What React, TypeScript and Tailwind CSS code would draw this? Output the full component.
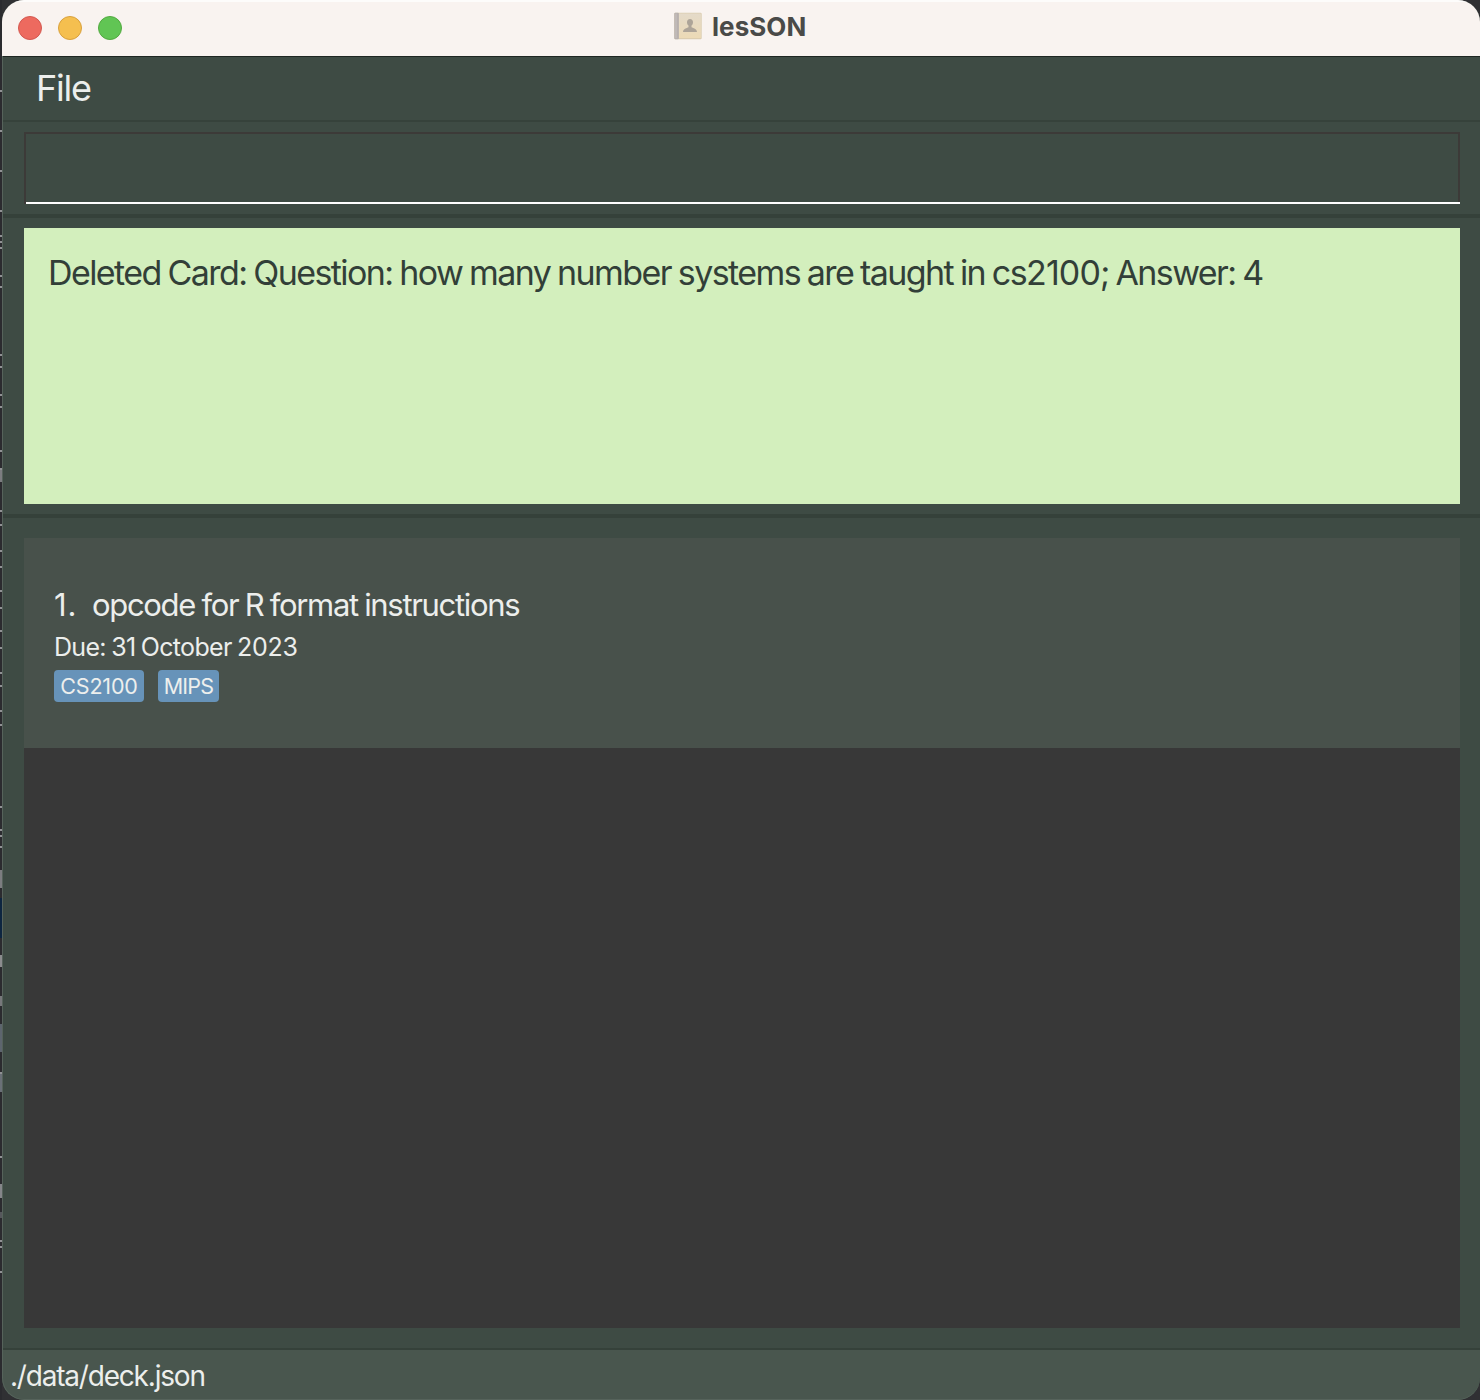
import React from "react";

const TICKS = [
  90, 130, 170, 210, 235, 241, 247, 275, 286, 354, 366, 394, 406, 450, 468, 510, 524, 550,
  566, 590, 607, 630, 647, 672, 685, 710, 724, 806, 829, 835, 846, 930, 1072, 1156, 1190, 1240, 1246, 1271,
];

const BLOCKS = [
  { top: 470, height: 12, color: "#7c7d80" },
  { top: 870, height: 18, color: "#7c7d80" },
  { top: 898, height: 40, color: "#0d2540" },
  { top: 955, height: 12, color: "#8b8c8e" },
  { top: 996, height: 10, color: "#77787b" },
  { top: 1024, height: 28, color: "#5d656e" },
  { top: 1074, height: 18, color: "#6a7077" },
  { top: 1184, height: 14, color: "#85868a" },
  { top: 1212, height: 6, color: "#56585c" },
];

function Backdrop() {
  return (
    <div className="absolute inset-y-0 left-0 w-0.5 overflow-hidden bg-[#2b2b2f]">
      {TICKS.map((top) => (
        <div key={top} className="absolute left-0 h-0.5 w-0.5 bg-[#919295]" style={{ top }} />
      ))}
      {BLOCKS.map((b) => (
        <div key={b.top} className="absolute left-0 w-0.5" style={{ top: b.top, height: b.height, background: b.color }} />
      ))}
    </div>
  );
}

function BookIcon() {
  return (
    <svg width="28" height="28" viewBox="0 0 28 28" className="shrink-0">
      <defs>
        <linearGradient id="cover" x1="0" y1="0" x2="0" y2="1">
          <stop offset="0" stopColor="#e4dac9" />
          <stop offset="1" stopColor="#ecdab6" />
        </linearGradient>
      </defs>
      <rect x="0.3" y="0.8" width="27.4" height="26.4" rx="1.2" fill="#dccdb0" />
      <rect x="4.5" y="1.6" width="22.4" height="24.4" rx="0.6" fill="url(#cover)" />
      <rect x="0.3" y="0.8" width="4.6" height="26.4" rx="1" fill="#b8b0ae" />
      <rect x="1.4" y="1.6" width="1.2" height="24.6" fill="#c6bfbd" />
      <path
        d="M16 7c-1.900 0-3 1.400-3 3.200 0 1.400.6 2.600 1.500 3.300v1.800c-1.800.9-5.300 1.500-5.500 4.700h14c-.2-3.200-3.700-3.800-5.500-4.700v-1.800c.9-.7 1.500-1.900 1.500-3.300C19 8.400 17.900 7 16 7z"
        fill="#ada498"
      />
    </svg>
  );
}

function TitleBar() {
  return (
    <header className="relative flex h-14 shrink-0 items-center gap-4 border-t-2 border-white/70 bg-[#f9f3f0] pb-0.5 pl-4">
      <span className="size-6 rounded-full border border-[#d35850] bg-[#ed6a5f]" />
      <span className="size-6 rounded-full border border-[#d8a03d] bg-[#f5bf4f]" />
      <span className="size-6 rounded-full border border-[#53a940] bg-[#61c554]" />
      <div className="absolute left-[672px] top-[9px] flex items-center gap-[10px]">
        <BookIcon />
        <h1 className="mt-0.5 whitespace-nowrap text-[26px] leading-7 font-bold tracking-[0.05px] text-[#4a4a48]">lesSON</h1>
      </div>
    </header>
  );
}

function Tag({ children, className }: { children: React.ReactNode; className: string }) {
  return (
    <span className={`flex h-8 items-center justify-center whitespace-nowrap rounded bg-[#6793b9] text-[21.5px] text-[#edefed] ${className}`}>
      {children}
    </span>
  );
}

export default function App() {
  return (
    <div className="relative h-[1400px] w-[1480px] overflow-hidden bg-[#303033] pl-0.5 font-['Inter',sans-serif] text-[#eceeec]">
      <Backdrop />
      <div className="relative flex h-full flex-col overflow-hidden rounded-[22px] bg-[#3e4b44]">
        <TitleBar />
        <nav className="flex h-[66px] shrink-0 items-center border-b-2 border-t border-b-[#36423b] border-t-[#1f2622] pb-0.5 pl-[34px]">
          <span className="text-[36px] leading-none tracking-[-1.2px]">File</span>
        </nav>
        <section className="h-24 shrink-0 border-b-4 border-[#35413a] px-[22px] pt-2.5 pr-5">
          <div className="h-[72px] border-2 border-b-0 border-[#3c3a38]">
            <div className="-mr-0.5 h-[70px] border-b-2 border-white" />
          </div>
        </section>
        <section className="h-[300px] shrink-0 border-b-4 border-[#35413a] pl-[22px] pr-5 pt-2.5">
          <div className="h-[276px] bg-[#d3efbd] pl-6 pt-[25px]">
            <p className="whitespace-nowrap text-[34px] leading-[40px] tracking-[-1.58px] text-[#323f38] [word-spacing:-1.2px]">
              Deleted Card: Question: how many number systems are taught in cs<span className="tracking-[-0.9px]">2100</span>; Answer: 4
            </p>
          </div>
        </section>
        <main className="h-[832px] shrink-0 border-b-2 border-[#35413a] pl-[22px] pr-5 pt-5">
          <div className="h-[790px] bg-[#383838]">
            <article className="h-[210px] bg-[#48514b] pl-[30px] pt-[47px]">
              <div className="flex h-10 items-center whitespace-nowrap text-[31px] tracking-[-1.32px]">
                <span className="w-[38px] tracking-[1px]">1.</span>
                <span className="[word-spacing:-1px]">opcode for R format instructions</span>
              </div>
              <p className="mt-1 h-9 whitespace-nowrap text-[25px] leading-9 tracking-[-0.7px] [word-spacing:-0.9px]">
                Due: 31 October <span className="tracking-[-0.3px]">2023</span>
              </p>
              <div className="mt-[5px] flex gap-3.5">
                <Tag className="w-[90px] tracking-[-0.2px]">CS2100</Tag>
                <Tag className="w-[61px] tracking-[-0.8px]">MIPS</Tag>
              </div>
            </article>
          </div>
        </main>
        <footer className="flex h-[50px] shrink-0 items-center bg-[#49564e] pl-2 pt-0.5">
          <span className="text-[28px] leading-9 tracking-[-1.2px]">./data/deck.json</span>
        </footer>
        <div className="pointer-events-none absolute inset-x-0 bottom-0 top-14 rounded-b-[22px] border border-t-0 border-r-0 border-[#56635b]" />
      </div>
    </div>
  );
}
